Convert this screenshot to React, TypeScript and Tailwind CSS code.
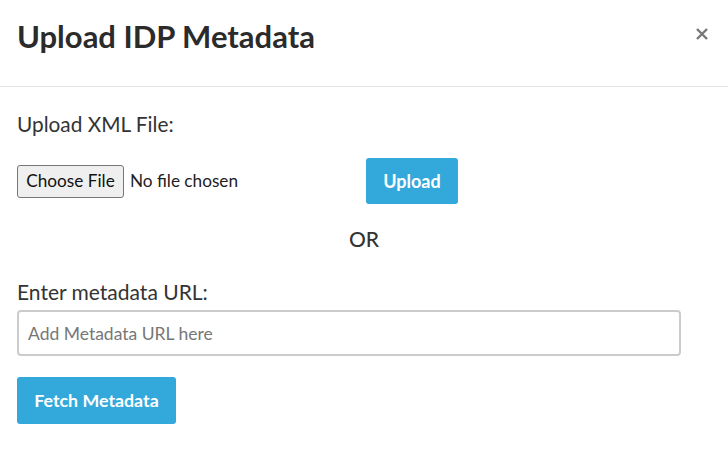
import React from "react";

export default function App() {
  return (
    <div className="w-[728px] h-[457px] bg-white text-[#333] overflow-hidden" style={{ fontFamily: "Lato, 'Open Sans', sans-serif" }}>
      <div className="h-[87px] border-b border-[#e5e5e5] pl-[17px] pr-[20px] pt-[18px] flex items-start justify-between">
        <h1 className="text-[31px] leading-[36px] font-bold text-[#2b2b2b]">Upload IDP Metadata</h1>
        <button className="mt-[10px] w-[12px] h-[12px]">
          <svg width="12" height="12" viewBox="0 0 12 12">
            <path d="M1 1 L11 11 M11 1 L1 11" stroke="#777" strokeWidth="2.4" strokeLinecap="butt" />
          </svg>
        </button>
      </div>
      <div className="px-[17px]">
        <div className="pt-[24px] text-[20.8px] leading-[25px]">Upload XML File:</div>
        <div className="mt-[22px] flex items-center h-[46px]">
          <div className="w-[349px] flex items-center">
            <span className="h-[33px] w-[107px] flex items-center justify-center bg-[#efefef] border border-[#767676] rounded-[3px] text-[17.2px] text-[#111]">Choose File</span>
            <span className="ml-[6px] text-[17.2px] text-[#222]">No file chosen</span>
          </div>
          <button className="h-[46px] w-[92px] bg-[#33a8db] rounded-[3px] text-white font-bold text-[18px]">Upload</button>
        </div>
        <div className="mt-[22px] text-[21px] leading-[25px] font-medium text-center">OR</div>
        <div className="mt-[28px] text-[21px] leading-[25px]">Enter metadata URL:</div>
        <input
          className="mt-[6px] block w-[664px] h-[46px] border-2 border-[#cccccc] rounded-[4px] px-[9px] text-[17.5px] placeholder:text-[#777] outline-none"
          placeholder="Add Metadata URL here"
        />
        <button className="mt-[21px] h-[47px] w-[159px] bg-[#33a8db] rounded-[3px] text-white font-bold text-[17.8px]">Fetch Metadata</button>
      </div>
    </div>
  );
}
